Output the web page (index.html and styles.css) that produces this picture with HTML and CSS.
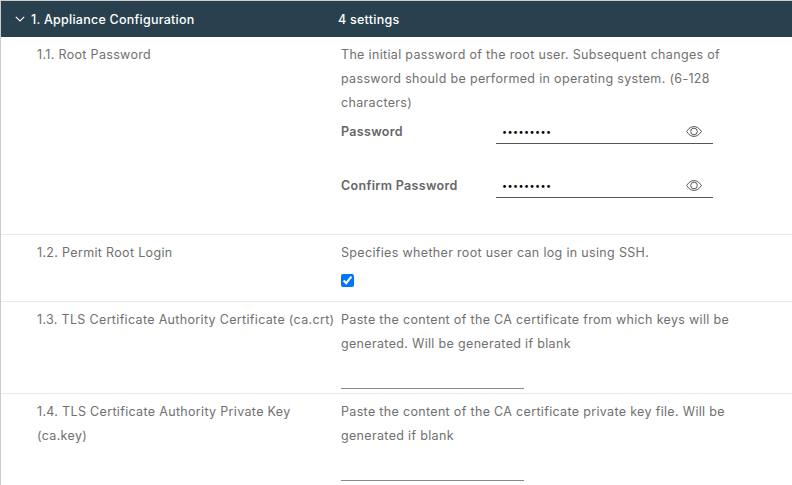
FILE: index.html
```html
<!DOCTYPE html>
<html lang="en">
<head>
  <meta charset="UTF-8" />
  <title>Appliance Configuration</title>
  <link rel="stylesheet" href="styles.css">
</head>
<body>
  <div class="stack-view">
    <!-- Group header -->
    <div class="group-header">
      <div class="group-title">
        <svg class="caret" width="10" height="6" viewBox="0 0 10 6"><path d="M0.8 0.8 L5 5 L9.2 0.8" fill="none" stroke="#fff" stroke-width="1.1"/></svg>
        <span>1. Appliance Configuration</span>
      </div>
      <div class="group-count">4 settings</div>
    </div>

    <!-- 1.1 -->
    <div class="row row-password">
      <div class="row-label">1.1. Root Password</div>
      <div class="row-body">
        <p class="desc">The initial password of the root user. Subsequent changes of password should be performed in operating system. (6-128 characters)</p>
        <div class="pw-line">
          <label class="pw-label">Password</label>
          <div class="pw-input">
            <span class="dots">•••••••••</span>
            <svg class="eye" width="16" height="11" viewBox="0 0 16 11"><path d="M0.6 5.5 C3 1.9 5.4 0.6 8 0.6 C10.6 0.6 13 1.9 15.4 5.5 C13 9.1 10.6 10.4 8 10.4 C5.4 10.4 3 9.1 0.6 5.5 Z" fill="none" stroke="#454545" stroke-width="0.9"/><circle cx="8" cy="5.5" r="3.3" fill="none" stroke="#454545" stroke-width="0.9"/></svg>
          </div>
        </div>
        <div class="pw-line">
          <label class="pw-label">Confirm Password</label>
          <div class="pw-input">
            <span class="dots">•••••••••</span>
            <svg class="eye" width="16" height="11" viewBox="0 0 16 11"><path d="M0.6 5.5 C3 1.9 5.4 0.6 8 0.6 C10.6 0.6 13 1.9 15.4 5.5 C13 9.1 10.6 10.4 8 10.4 C5.4 10.4 3 9.1 0.6 5.5 Z" fill="none" stroke="#454545" stroke-width="0.9"/><circle cx="8" cy="5.5" r="3.3" fill="none" stroke="#454545" stroke-width="0.9"/></svg>
          </div>
        </div>
      </div>
    </div>

    <!-- 1.2 -->
    <div class="row row-login">
      <div class="row-label">1.2. Permit Root Login</div>
      <div class="row-body">
        <p class="desc">Specifies whether root user can log in using SSH.</p>
        <input class="check" type="checkbox" checked />
      </div>
    </div>

    <!-- 1.3 -->
    <div class="row row-cert">
      <div class="row-label">1.3. TLS Certificate Authority Certificate (ca.crt)</div>
      <div class="row-body">
        <p class="desc">Paste the content of the CA certificate from which keys will be generated. Will be generated if blank</p>
        <div class="blank-input"></div>
      </div>
    </div>

    <!-- 1.4 -->
    <div class="row row-cert">
      <div class="row-label">1.4. TLS Certificate Authority Private Key (ca.key)</div>
      <div class="row-body">
        <p class="desc">Paste the content of the CA certificate private key file. Will be generated if blank</p>
        <div class="blank-input"></div>
      </div>
    </div>
  </div>
</body>
</html>
```

FILE: styles.css
```css
/* Page */
html, body {
  height: 485px;
  overflow: hidden;
}

body {
  margin: 0;
  background: #fff;
  font-family: Inter, sans-serif;
  font-size: 12.5px;
  letter-spacing: 0.33px;
  color: #707070;
}

.stack-view {
  height: 484px;
  overflow: hidden;
  border-top: 1px solid #ccc;
  border-left: 1px solid #ccc;
}

/* Header bar */
.group-header {
  display: flex;
  align-items: center;
  height: 36px;
  background: #29414e;
  color: #fff;
  font-weight: 500;
  letter-spacing: 0.25px;
}

.group-title {
  display: flex;
  align-items: center;
  gap: 6px;
  width: 323px;
  padding-left: 14px;
  box-sizing: border-box;
}

.group-count {
  padding-left: 14px;
}

/* Rows */
.row {
  display: flex;
  border-bottom: 1px solid #e8e8e8;
  box-sizing: border-box;
}

.row-password { height: 198px; }
.row-login { height: 67px; }
.row-cert { height: 92px; }

.row-label {
  width: 340px;
  padding: 6px 2px 0 36px;
  box-sizing: border-box;
  line-height: 24px;
}

.row-body {
  width: 400px;
  padding-top: 6px;
}

.desc {
  margin: 0;
  line-height: 24px;
}

/* Password fields */
.pw-line {
  display: flex;
  align-items: center;
  height: 32px;
  margin-bottom: 22px;
}

.pw-label {
  width: 155px;
  font-weight: 600;
  color: #666;
}

.pw-input {
  display: flex;
  align-items: center;
  justify-content: space-between;
  width: 217px;
  height: 26px;
  padding: 1px 11px 0 6px;
  box-sizing: border-box;
  border-bottom: 1px solid #565656;
  color: #000;
}

.dots {
  font-size: 9px;
  letter-spacing: 0.45px;
}

/* Checkbox */
.check {
  display: block;
  width: 13px;
  height: 13px;
  margin: 9px 0 0;
}

/* Empty text area underline */
.blank-input {
  width: 183px;
  height: 1px;
  margin-top: 32px;
  background: #888;
}
```
